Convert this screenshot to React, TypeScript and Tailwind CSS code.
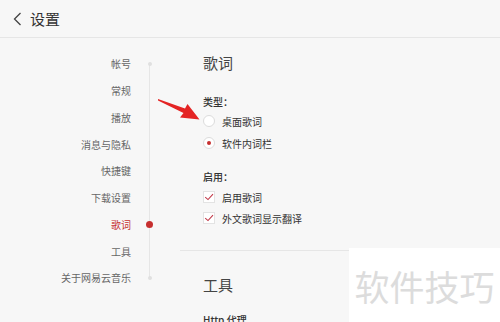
const navItems = ['帐号', '常规', '播放', '消息与隐私', '快捷键', '下载设置', '歌词', '工具', '关于网易云音乐'];

function Radio({ checked, label }: { checked?: boolean; label: string }) {
  return (
    <div className="flex items-center h-[20px] gap-[7px]">
      <span className="w-[12px] h-[12px] rounded-full border border-[#dcdcdc] bg-white flex items-center justify-center">
        {checked && <span className="w-[4px] h-[4px] rounded-full bg-[#c62f2f]" />}
      </span>
      <span className="text-[10px] text-[#333]">{label}</span>
    </div>
  );
}

function Check({ label }: { label: string }) {
  return (
    <div className="flex items-center h-[20px] gap-[7px]">
      <span className="w-[12px] h-[12px] border border-[#e3e3e3] bg-white flex items-center justify-center">
        <svg width="10" height="8" viewBox="0 0 10 8">
          <path d="M1.2 4.2 L4 6.6 L9 1.2" fill="none" stroke="#c23a4a" strokeWidth="1.1" />
        </svg>
      </span>
      <span className="text-[10px] text-[#333]">{label}</span>
    </div>
  );
}

export default function App() {
  return (
    <div
      className="relative w-[500px] h-[322px] overflow-hidden bg-[#f7f7f7]"
      style={{ fontFamily: '"Noto Sans CJK SC", "Noto Sans", sans-serif' }}
    >
      {/* header */}
      <div className="h-[38px] border-b border-[#e6e6e6] flex items-center pl-[13px]">
        <svg width="9" height="14" viewBox="0 0 9 14">
          <path d="M7.5 1 L1.5 7 L7.5 13" fill="none" stroke="#444" strokeWidth="1.3" />
        </svg>
        <span className="ml-[8px] text-[15px] text-[#333] leading-none">设置</span>
      </div>

      <div className="flex">
        {/* nav */}
        <div className="relative w-[180px] pt-[12.6px]">
          <div className="absolute left-[149px] top-[26px] h-[214px] w-px bg-[#e6e6e6]" />
          {navItems.map((item, i) => (
            <div key={item} className="flex items-center h-[26.75px]">
              <span
                className={
                  'w-[131px] text-right text-[10px] ' +
                  (item === '歌词' ? 'text-[#c62f2f]' : 'text-[#666]')
                }
              >
                {item}
              </span>
              <span className="relative ml-[18.5px] w-0 h-0">
                {item === '歌词' ? (
                  <span className="absolute -left-[3.5px] -top-[3.5px] w-[7px] h-[7px] rounded-full bg-[#c62f2f]" />
                ) : i === 0 || i === navItems.length - 1 ? (
                  <span className="absolute -left-[2px] -top-[2px] w-[4px] h-[4px] rounded-full bg-[#e0e0e0]" />
                ) : null}
              </span>
            </div>
          ))}
        </div>

        {/* content */}
        <div className="flex-1">
          <div className="pl-[23px] pt-[15px] pb-[22px]">
            <div className="h-[20px] text-[15px] leading-[20px] text-[#444]">歌词</div>
            <div className="mt-[22px] h-[14px] text-[10px] leading-[14px] font-medium text-[#333]">类型：</div>
            <div className="mt-[2px]">
              <Radio label="桌面歌词" />
            </div>
            <div className="mt-[2px]">
              <Radio checked label="软件内词栏" />
            </div>
            <div className="mt-[17px] h-[14px] text-[10px] leading-[14px] font-medium text-[#333]">启用：</div>
            <div className="mt-[3px]">
              <Check label="启用歌词" />
            </div>
            <div className="mt-[1px]">
              <Check label="外文歌词显示翻译" />
            </div>
          </div>
          <div className="border-t border-[#e6e6e6] pl-[23px] pt-[24px]">
            <div className="h-[20px] text-[15px] leading-[20px] text-[#444]">工具</div>
            <div className="mt-[18px] h-[14px] text-[10px] leading-[14px] font-medium text-[#333]">Http 代理</div>
          </div>
        </div>
      </div>

      {/* annotation arrow */}
      <svg className="absolute left-0 top-0 pointer-events-none" width="500" height="322">
        <polygon
          points="158,99 185,108.5 187.5,104 199.5,119.5 180,117.5 183.5,113 158,100.5"
          fill="#e42424"
        />
      </svg>

      {/* watermark */}
      <div className="absolute left-[349px] top-[248px] w-[151px] h-[74px] bg-white flex items-center justify-center">
        <span className="text-[35px] leading-none text-[#dcdcdc]">软件技巧</span>
      </div>
    </div>
  );
}
